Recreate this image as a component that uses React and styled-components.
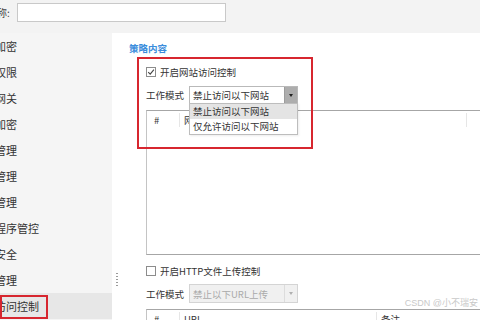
import React from 'react';
import styled, { createGlobalStyle } from 'styled-components';

const GlobalStyle = createGlobalStyle`
  html, body {
    margin: 0;
    padding: 0;
    background: #fff;
  }
  body {
    font-family: "Noto Sans CJK SC", "Liberation Sans", sans-serif;
    color: #333;
  }
`;

const Page = styled.div`
  width: 480px;
  height: 320px;
  overflow: hidden;
  display: flex;
  flex-direction: column;
  position: relative;
`;

const TopBar = styled.div`
  height: 33px;
  flex: none;
  background: #f3f3f3;
  display: flex;
  align-items: flex-start;
  padding-top: 3px;
  box-sizing: border-box;
`;

const TopLabel = styled.span`
  font-size: 10px;
  line-height: 19px;
  margin-left: -3px;
  width: 20px;
  color: #444;
`;

const NameInput = styled.div`
  width: 209px;
  height: 19px;
  box-sizing: border-box;
  background: #fff;
  border: 1px solid #c9c9c9;
`;

const Body = styled.div`
  flex: 1;
  display: flex;
  min-height: 0;
`;

const Sidebar = styled.div`
  width: 112px;
  flex: none;
  background: #f5f5f5;
  position: relative;
  display: flex;
  flex-direction: column;
`;

const NavItem = styled.div`
  height: 26px;
  flex: none;
  display: flex;
  align-items: center;
  position: relative;
  overflow: hidden;
  font-size: 11px;
  color: #333;
  background: ${p => (p.$active ? '#e7e7e7' : 'transparent')};
`;

const NavText = styled.span`
  margin-left: -5px;
  white-space: nowrap;
`;

const Mark = styled.div`
  position: absolute;
  left: 0;
  top: 2px;
  width: 48px;
  height: 24px;
  box-sizing: border-box;
  border: 2px solid #d7262f;
`;

const Splitter = styled.div`
  position: absolute;
  right: -6px;
  top: 240px;
  width: 2px;
  height: 14px;
  background: repeating-linear-gradient(#9a9a9a 0 1px, transparent 1px 3px);
`;

const Main = styled.div`
  flex: 1;
  min-width: 0;
  padding: 8px 0 0 17px;
  display: flex;
  flex-direction: column;
`;

const SectionTitle = styled.div`
  font-size: 9.5px;
  line-height: 14px;
  color: #3b8ddc;
  font-weight: 600;
`;

const Group = styled.div`
  margin-left: 17px;
  display: flex;
  flex-direction: column;
  position: relative;
  margin-top: ${p => p.$top}px;
`;

const CheckRow = styled.div`
  height: 16px;
  display: flex;
  align-items: center;
  gap: 4px;
  font-size: 9.5px;
  color: #333;
`;

const Box = styled.span`
  width: 10px;
  height: 10px;
  box-sizing: border-box;
  border: 1px solid #8c8c8c;
  background: #fff;
  display: inline-flex;
  align-items: center;
  justify-content: center;
`;

const ModeRow = styled.div`
  display: flex;
  align-items: center;
  margin-top: ${p => p.$top}px;
  font-size: 9.5px;
  color: #333;
`;

const ModeLabel = styled.span`
  width: 43px;
`;

const SelectWrap = styled.div`
  position: relative;
  width: 109px;
  height: ${p => p.$h}px;
  box-sizing: border-box;
  border: 1px solid ${p => (p.$disabled ? '#d4d4d4' : '#b9b9b9')};
  background: ${p => (p.$disabled ? '#f0f0f0' : '#fff')};
  display: flex;
  align-items: stretch;
`;

const SelectText = styled.span`
  flex: 1;
  padding-left: 3px;
  display: flex;
  align-items: center;
  color: ${p => (p.$disabled ? '#aaa' : '#333')};
  white-space: nowrap;
`;

const ArrowBtn = styled.span`
  width: 12px;
  display: flex;
  align-items: center;
  justify-content: center;
  background: ${p => (p.$disabled ? '#f0f0f0' : '#adadad')};
  border-left: 1px solid ${p => (p.$disabled ? '#dcdcdc' : '#9c9c9c')};
  &::after {
    content: '';
    border-left: 2.5px solid transparent;
    border-right: 2.5px solid transparent;
    border-top: 3px solid ${p => (p.$disabled ? '#b0b0b0' : '#222')};
  }
`;

const DropList = styled.div`
  position: absolute;
  left: -1px;
  top: 100%;
  width: 109px;
  box-sizing: border-box;
  background: #fff;
  border: 1px solid #bdbdbd;
  z-index: 3;
  box-shadow: 1px 1px 2px rgba(0, 0, 0, 0.08);
`;

const DropItem = styled.div`
  height: 15px;
  line-height: 15px;
  padding-left: 3px;
  font-size: 9.5px;
  color: #333;
  background: ${p => (p.$hover ? '#e4e4e4' : '#fff')};
  white-space: nowrap;
`;

const Table = styled.div`
  margin-top: 6px;
  height: ${p => p.$h}px;
  flex: none;
  box-sizing: border-box;
  border-top: 1px solid #a6a6a6;
  border-left: 1px solid #c4c4c4;
  border-bottom: 1px solid #a6a6a6;
  background: #fff;
`;

const HeadRow = styled.div`
  height: 18px;
  display: flex;
  font-size: 9.5px;
  color: #333;
`;

const HeadCell = styled.div`
  width: ${p => (p.$w ? `${p.$w}px` : 'auto')};
  flex: ${p => (p.$w ? 'none' : 1)};
  padding-left: ${p => p.$pl ?? 4}px;
  display: flex;
  align-items: center;
  border-right: ${p => (p.$sep ? '1px solid #e6e6e6' : 'none')};
  margin: 2px 0;
`;

const RedFrame = styled.div`
  position: absolute;
  left: -9px;
  top: -7px;
  width: 176px;
  height: 92px;
  box-sizing: border-box;
  border: 2px solid #d7262f;
  z-index: 4;
  pointer-events: none;
`;

const Watermark = styled.div`
  position: absolute;
  right: 2px;
  top: 296px;
  font-size: 9px;
  color: #c9c9c9;
  font-family: "Liberation Sans", "Noto Sans CJK SC", sans-serif;
  white-space: nowrap;
`;

const nav = ['加密', '权限', '网关', '加密', '管理', '管理', '管理', '程序管控', '安全', '管理', '访问控制'];

const Check = ({ checked }) => (
  <Box>
    {checked && (
      <svg width="8" height="8" viewBox="0 0 8 8">
        <path d="M1.2 4.2 L3.2 6.1 L6.9 1.6" fill="none" stroke="#444" strokeWidth="1.1" />
      </svg>
    )}
  </Box>
);

export default function App() {
  return (
    <>
      <GlobalStyle />
      <Page>
        <TopBar>
          <TopLabel>称:</TopLabel>
          <NameInput />
        </TopBar>
        <Body>
          <Sidebar>
            {nav.map((n, i) => (
              <NavItem key={i} $active={i === nav.length - 1}>
                <NavText>{n}</NavText>
                {i === nav.length - 1 && <Mark />}
              </NavItem>
            ))}
            <Splitter />
          </Sidebar>
          <Main>
            <SectionTitle>策略内容</SectionTitle>
            <Group $top={9}>
              <RedFrame />
              <CheckRow>
                <Check checked />
                开启网站访问控制
              </CheckRow>
              <ModeRow $top={6}>
                <ModeLabel>工作模式</ModeLabel>
                <SelectWrap $h={18}>
                  <SelectText>禁止访问以下网站</SelectText>
                  <ArrowBtn />
                  <DropList>
                    <DropItem $hover>禁止访问以下网站</DropItem>
                    <DropItem>仅允许访问以下网站</DropItem>
                  </DropList>
                </SelectWrap>
              </ModeRow>
              <Table $h={145}>
                <HeadRow>
                  <HeadCell $w={25} $pl={7} $sep>#</HeadCell>
                  <HeadCell $w={282} $sep>网站</HeadCell>
                  <HeadCell />
                </HeadRow>
              </Table>
            </Group>
            <Group $top={8}>
              <CheckRow>
                <Check />
                开启HTTP文件上传控制
              </CheckRow>
              <ModeRow $top={5}>
                <ModeLabel>工作模式</ModeLabel>
                <SelectWrap $h={19} $disabled>
                  <SelectText $disabled>禁止以下URL上传</SelectText>
                  <ArrowBtn $disabled />
                </SelectWrap>
              </ModeRow>
              <Table $h={60}>
                <HeadRow>
                  <HeadCell $w={25} $pl={7} $sep>#</HeadCell>
                  <HeadCell $w={192} $sep>URL</HeadCell>
                  <HeadCell>备注</HeadCell>
                </HeadRow>
              </Table>
            </Group>
          </Main>
        </Body>
        <Watermark>CSDN @小不瑞安</Watermark>
      </Page>
    </>
  );
}
